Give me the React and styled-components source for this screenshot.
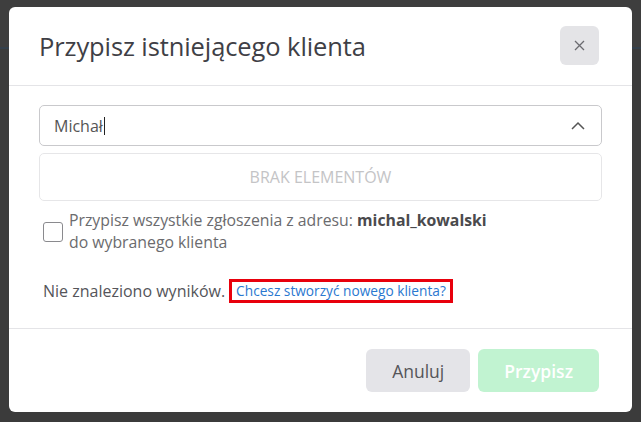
import React from "react";
import styled, { createGlobalStyle } from "styled-components";

const Global = createGlobalStyle`
  html, body { margin: 0; padding: 0; }
  body {
    background: #3b3b3b;
    font-family: "Open Sans", "Noto Sans", sans-serif;
    width: 641px;
    height: 422px;
    overflow: hidden;
  }
`;

const Backdrop = styled.div`
  width: 641px;
  height: 422px;
  padding: 7px 9px;
  box-sizing: border-box;
  background:
    linear-gradient(to bottom,
      #3e3e3e 0px, #3e3e3e 47px,
      #34404c 47px, #34404c 49px,
      #3b3b3b 49px, #3b3b3b 100%);
`;

const Modal = styled.div`
  width: 623px;
  height: 405px;
  background: #fff;
  border-radius: 6px;
  display: flex;
  flex-direction: column;
  overflow: hidden;
`;

const Header = styled.div`
  height: 79px;
  box-sizing: border-box;
  display: flex;
  align-items: center;
  justify-content: space-between;
  padding: 0 33px 0 30px;
  border-bottom: 1px solid #e4e4e7;
  flex-shrink: 0;
`;

const Title = styled.h2`
  margin: 0;
  font-size: 25.5px;
  font-weight: 500;
  color: #3f3f46;
  letter-spacing: -0.1px;
`;

const CloseButton = styled.button`
  width: 39px;
  height: 39px;
  border: none;
  border-radius: 6px;
  background: #e4e4e7;
  display: flex;
  align-items: center;
  justify-content: center;
  padding: 0;
  margin-top: -1px;
`;

const Body = styled.div`
  flex: 1;
  padding: 19px 30px 0 30px;
  display: flex;
  flex-direction: column;
  border-bottom: 1px solid #e4e4e7;
`;

const SelectBox = styled.div`
  height: 41px;
  box-sizing: border-box;
  border: 1px solid #c9c9cc;
  border-radius: 5px;
  display: flex;
  align-items: center;
  justify-content: space-between;
  padding: 0 16px 0 14px;
  font-size: 16px;
  color: #555;
`;

const Caret = styled.span`
  display: inline-block;
  width: 1px;
  height: 18px;
  background: #222;
  margin-left: 1px;
  vertical-align: -3px;
`;

const EmptyBox = styled.div`
  margin-top: 7px;
  height: 48px;
  box-sizing: border-box;
  border: 1px solid #e6e6e8;
  border-radius: 5px;
  display: flex;
  align-items: center;
  justify-content: center;
  font-size: 16px;
  color: #c4c4c6;
`;

const CheckRow = styled.label`
  margin-top: 8px;
  display: flex;
  align-items: center;
  gap: 6px;
  padding-left: 4px;
  font-size: 15.8px;
  line-height: 22px;
  color: #6b6b6e;
`;

const CheckBox = styled.span`
  width: 18px;
  height: 18px;
  border: 1px solid #8a8a8e;
  border-radius: 3px;
  flex-shrink: 0;
  margin-top: 2px;
`;

const Strong = styled.b`
  font-weight: 700;
  color: #4a4a4d;
`;

const ResultRow = styled.div`
  margin-top: 26px;
  display: flex;
  align-items: center;
  gap: 4px;
  padding-left: 4px;
  font-size: 16px;
  color: #55555a;
`;

const LinkBox = styled.span`
  display: inline-block;
  border: 3px solid #e8000c;
  padding: 0 4px;
  font-size: 13.7px;
  line-height: 18px;
  font-weight: 500;
  color: #2a78d0;
`;

const Footer = styled.div`
  height: 83px;
  box-sizing: border-box;
  display: flex;
  justify-content: flex-end;
  align-items: flex-start;
  gap: 8px;
  padding: 20px 33px 0 0;
  flex-shrink: 0;
`;

const Button = styled.button`
  height: 43px;
  border: none;
  border-radius: 6px;
  padding: 0 ${(p) => (p.$primary ? 26 : 26)}px;
  font-family: "Open Sans", "Noto Sans", sans-serif;
  font-size: 17.5px;
  font-weight: ${(p) => (p.$primary ? 600 : 500)};
  background: ${(p) => (p.$primary ? "#c1f3d1" : "#e4e4e8")};
  color: ${(p) => (p.$primary ? "#ffffff" : "#555559")};
`;

export default function App() {
  return (
    <>
      <Global />
      <Backdrop>
        <Modal>
          <Header>
            <Title>Przypisz istniejącego klienta</Title>
            <CloseButton aria-label="Zamknij">
              <svg width="11" height="11" viewBox="0 0 11 11">
                <path d="M1 1 L10 10 M10 1 L1 10" stroke="#6b6b70" strokeWidth="1.3" />
              </svg>
            </CloseButton>
          </Header>
          <Body>
            <SelectBox>
              <span>
                Michał<Caret />
              </span>
              <svg width="14" height="9" viewBox="0 0 14 9">
                <polyline points="1,8 7,2 13,8" fill="none" stroke="#555" strokeWidth="1.5" />
              </svg>
            </SelectBox>
            <EmptyBox>BRAK ELEMENTÓW</EmptyBox>
            <CheckRow>
              <CheckBox />
              <span>
                Przypisz wszystkie zgłoszenia z adresu: <Strong>michal_kowalski</Strong>
                <br />
                do wybranego klienta
              </span>
            </CheckRow>
            <ResultRow>
              <span>Nie znaleziono wyników.</span>
              <LinkBox>Chcesz stworzyć nowego klienta?</LinkBox>
            </ResultRow>
          </Body>
          <Footer>
            <Button>Anuluj</Button>
            <Button $primary>Przypisz</Button>
          </Footer>
        </Modal>
      </Backdrop>
    </>
  );
}
